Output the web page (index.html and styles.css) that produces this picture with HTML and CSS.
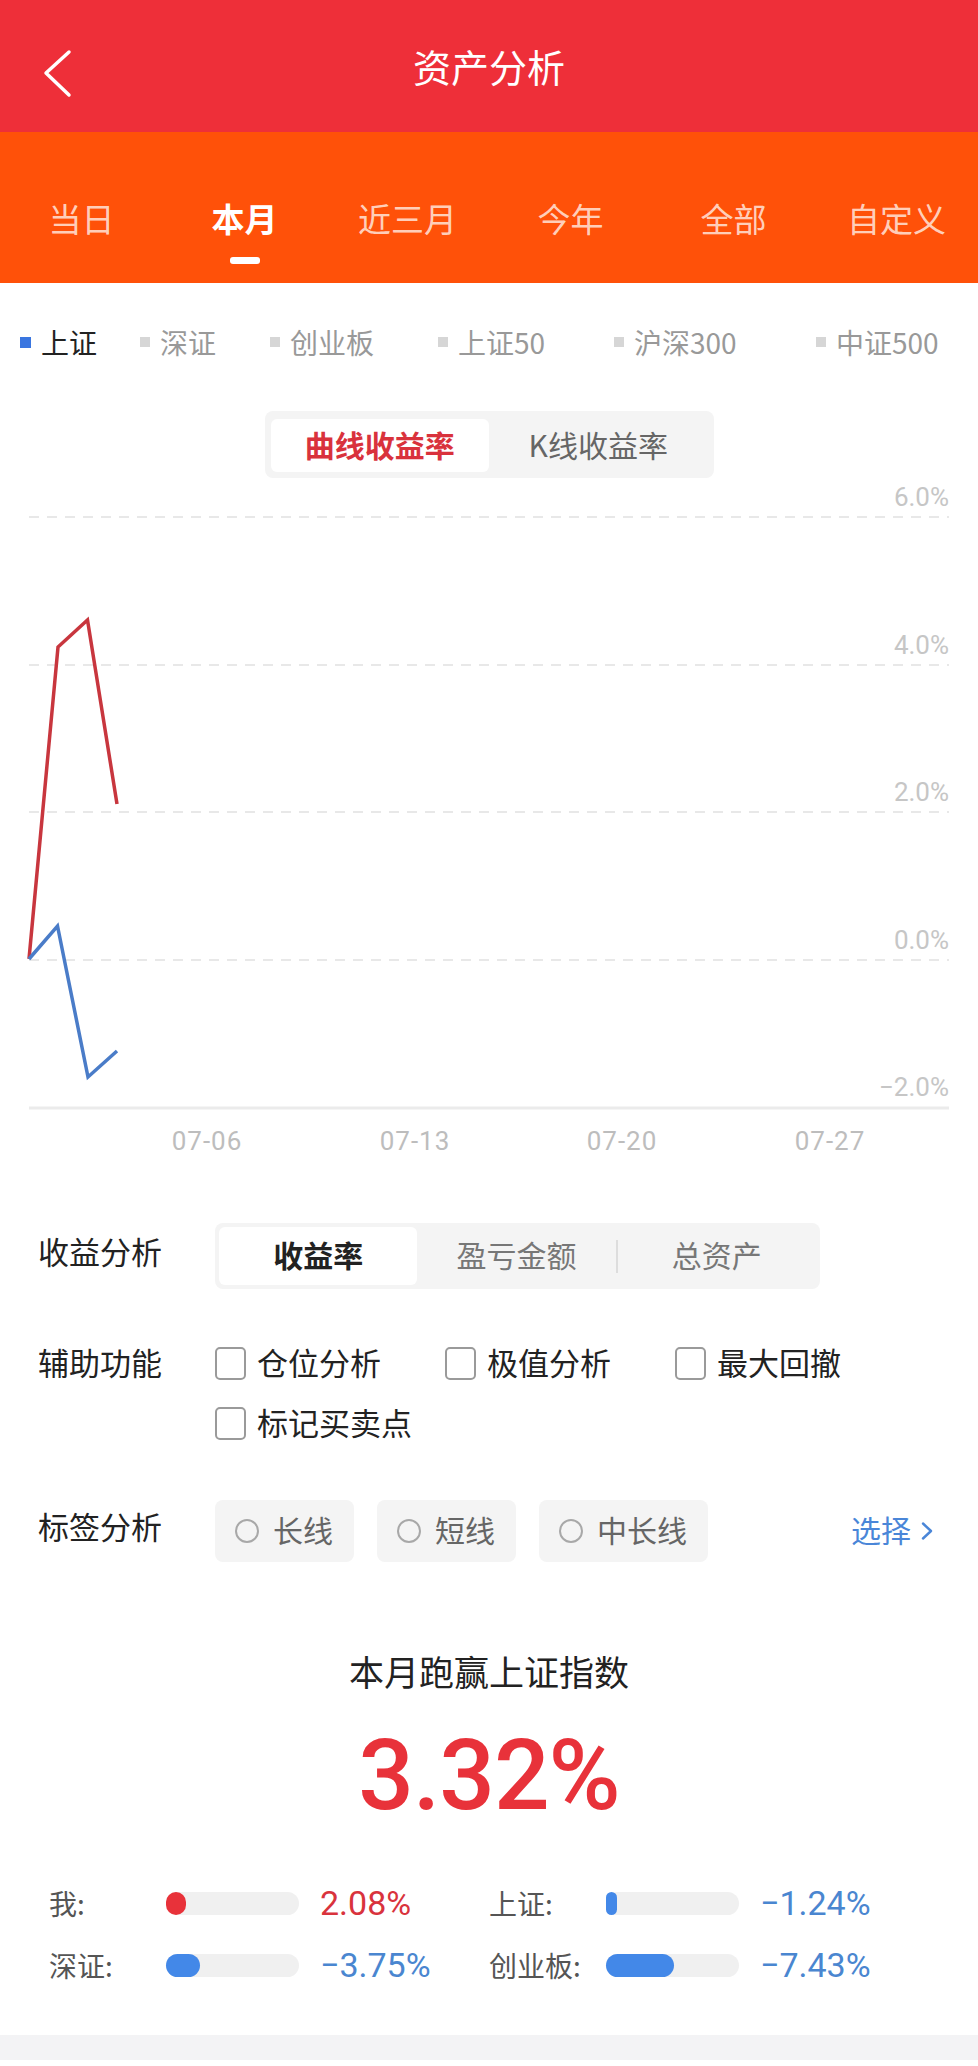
FILE: index.html
```html
<!DOCTYPE html>
<html lang="zh-CN">
<head>
<meta charset="utf-8">
<title>资产分析</title>
<link rel="stylesheet" href="styles.css">
</head>
<body>
<header class="nav">
  <button class="nav-back" aria-label="返回">
    <svg width="32" height="50" viewBox="0 0 32 50"><polyline points="26,4 3,25 26,47" fill="none" stroke="#fff" stroke-width="3.5" stroke-linecap="round" stroke-linejoin="round"/></svg>
  </button>
  <h1 class="nav-title">资产分析</h1>
  <span></span>
</header>

<nav class="tabs">
  <div class="tab">当日</div>
  <div class="tab active">本月</div>
  <div class="tab">近三月</div>
  <div class="tab">今年</div>
  <div class="tab">全部</div>
  <div class="tab">自定义</div>
</nav>

<div class="legend">
  <span class="legend-item active">上证</span>
  <span class="legend-item">深证</span>
  <span class="legend-item">创业板</span>
  <span class="legend-item">上证50</span>
  <span class="legend-item">沪深300</span>
  <span class="legend-item">中证500</span>
</div>

<div class="seg">
  <div class="seg-item active">曲线收益率</div>
  <div class="seg-item">K线收益率</div>
</div>

<svg class="chart" width="978" height="702" viewBox="0 0 978 702">
  <g class="grid">
    <line x1="29" y1="39" x2="949" y2="39"/>
    <line x1="29" y1="187" x2="949" y2="187"/>
    <line x1="29" y1="334" x2="949" y2="334"/>
    <line x1="29" y1="482" x2="949" y2="482"/>
  </g>
  <line class="axis" x1="29" y1="630" x2="949" y2="630"/>
  <g class="y-labels">
    <text x="949" y="19">6.0%</text>
    <text x="949" y="167">4.0%</text>
    <text x="949" y="314">2.0%</text>
    <text x="949" y="462">0.0%</text>
    <text x="949" y="609">−2.0%</text>
  </g>
  <g class="x-labels">
    <text x="207" y="663">07-06</text>
    <text x="415" y="663">07-13</text>
    <text x="622" y="663">07-20</text>
    <text x="830" y="663">07-27</text>
  </g>
  <polyline class="line-mine" points="29,481 58,169 87.5,142 117,326"/>
  <polyline class="line-index" points="29,481 57.5,448 88,599 117,573"/>
</svg>

<section class="opt-row opt-center">
  <div class="opt-label">收益分析</div>
  <div class="seg2">
    <div class="seg2-item active">收益率</div>
    <div class="seg2-item">盈亏金额</div>
    <i class="seg2-divider"></i>
    <div class="seg2-item">总资产</div>
  </div>
</section>

<section class="opt-row opt-checks">
  <div class="opt-label">辅助功能</div>
  <div class="checks">
    <label class="check"><span class="box"></span>仓位分析</label>
    <label class="check"><span class="box"></span>极值分析</label>
    <label class="check"><span class="box"></span>最大回撤</label>
    <label class="check"><span class="box"></span>标记买卖点</label>
  </div>
</section>

<section class="opt-row opt-center opt-tags">
  <div class="opt-label">标签分析</div>
  <div class="tags">
    <span class="chip"><span class="radio"></span><span class="chip-text">长线</span></span>
    <span class="chip"><span class="radio"></span><span class="chip-text">短线</span></span>
    <span class="chip"><span class="radio"></span><span class="chip-text">中长线</span></span>
    <a class="pick"><span class="pick-text">选择</span><svg width="12" height="18" viewBox="0 0 12 18"><polyline points="2,1.5 10,9 2,16.5" fill="none" stroke="#4A86D8" stroke-width="2.4" stroke-linecap="round" stroke-linejoin="round"/></svg></a>
  </div>
</section>

<section class="summary">
  <h2 class="summary-title">本月跑赢上证指数</h2>
  <div class="summary-value">3.32%</div>
  <div class="stats">
    <div class="stat"><span class="stat-label">我:</span><span class="track"><span class="fill up" style="width:20px"></span></span><span class="stat-val up">2.08%</span></div>
    <div class="stat"><span class="stat-label">上证:</span><span class="track"><span class="fill down" style="width:11px"></span></span><span class="stat-val down">−1.24%</span></div>
    <div class="stat"><span class="stat-label">深证:</span><span class="track"><span class="fill down" style="width:34px"></span></span><span class="stat-val down">−3.75%</span></div>
    <div class="stat"><span class="stat-label">创业板:</span><span class="track"><span class="fill down" style="width:68px"></span></span><span class="stat-val down">−7.43%</span></div>
  </div>
</section>

<footer class="foot"></footer>
</body>
</html>
```

FILE: styles.css
```css
* {
  box-sizing: border-box;
  margin: 0;
  padding: 0;
}

body {
  width: 978px;
  background: #fff;
  font-family: "Noto Sans CJK SC", "Noto Sans", sans-serif;
  color: #222;
}

/* top bar */
.nav {
  height: 132px;
  background: #EE2F39;
  display: grid;
  grid-template-columns: 120px 1fr 120px;
  align-items: center;
}

.nav-back {
  align-self: start;
  margin: 48px 0 0 43px;
  width: 32px;
  height: 50px;
  background: none;
  border: 0;
}

.nav-back svg {
  display: block;
}

.nav-title {
  text-align: center;
  color: #fff;
  font-size: 38px;
  font-weight: 400;
  line-height: 50px;
}

/* period tabs */
.tabs {
  height: 151px;
  background: #FF5109;
  display: grid;
  grid-template-columns: repeat(6, 1fr);
}

.tab {
  display: flex;
  flex-direction: column;
  align-items: center;
  padding-top: 66px;
  font-size: 33px;
  line-height: 40px;
  color: rgba(255, 255, 255, 0.74);
}

.tab.active {
  color: #fff;
  font-weight: 700;
}

.tab.active::after {
  content: "";
  width: 30px;
  height: 7px;
  border-radius: 3px;
  background: #fff;
  margin-top: 19px;
}

/* index legend */
.legend {
  display: grid;
  grid-template-columns: 120px 130px 168px 176px 202px 1fr;
  padding: 41px 0 0 20px;
  font-size: 28px;
  line-height: 36px;
  color: #999;
}

.legend-item {
  display: flex;
  align-items: center;
  gap: 10px;
}

.legend-item::before {
  content: "";
  width: 10px;
  height: 10px;
  background: #D6D6D6;
}

.legend-item.active {
  color: #222;
}

.legend-item.active::before {
  width: 11px;
  height: 11px;
  background: #3A76E0;
}

/* chart mode switch */
.seg {
  width: 449px;
  height: 67px;
  margin: 51px auto 0;
  background: #F4F4F4;
  border-radius: 8px;
  padding: 8px 6px 6px;
  display: grid;
  grid-template-columns: 1fr 1fr;
}

.seg-item {
  display: flex;
  align-items: center;
  justify-content: center;
  padding-bottom: 4px;
  font-size: 30px;
  color: #666;
  border-radius: 6px;
}

.seg-item.active {
  background: #fff;
  color: #D9323C;
  font-weight: 700;
}

/* chart */
.chart {
  display: block;
}

.grid line {
  stroke: #E8E8E8;
  stroke-width: 2;
  stroke-dasharray: 10 8;
}

.axis {
  stroke: #EBEBEB;
  stroke-width: 3;
}

.y-labels text {
  font-family: Roboto, "Liberation Sans", sans-serif;
  font-size: 26px;
  fill: #C6C6C6;
  text-anchor: end;
  dominant-baseline: central;
}

.x-labels text {
  font-family: Roboto, "Liberation Sans", sans-serif;
  font-size: 26px;
  letter-spacing: 1px;
  fill: #BDBDBD;
  text-anchor: middle;
  dominant-baseline: central;
}

.line-mine,
.line-index {
  fill: none;
  stroke-width: 3.5;
  stroke-linejoin: miter;
}

.line-mine {
  stroke: #C8363E;
}

.line-index {
  stroke: #4A7CC8;
}

/* option rows */
.opt-row {
  display: grid;
  grid-template-columns: 177px 1fr;
  padding: 0 45px 0 38px;
  margin-top: 53px;
  align-items: start;
}

.opt-center {
  align-items: center;
  margin-top: 43px;
}

.opt-center .opt-label {
  padding-bottom: 10px;
}

.opt-tags {
  margin-top: 58px;
}

.opt-label {
  font-size: 31px;
  line-height: 40px;
  color: #222;
}

.seg2 {
  width: 605px;
  height: 66px;
  background: #F4F4F4;
  border-radius: 8px;
  padding: 4px;
  display: flex;
  align-items: stretch;
}

.seg2-item {
  flex: 1;
  display: flex;
  align-items: center;
  justify-content: center;
  padding-bottom: 5px;
  font-size: 30px;
  color: #777;
  border-radius: 6px;
}

.seg2-item.active {
  background: #fff;
  color: #222;
  font-weight: 700;
}

.seg2-divider {
  width: 2px;
  height: 33px;
  align-self: center;
  background: #DDDDDD;
}

.checks {
  display: grid;
  grid-template-columns: repeat(3, 230px);
  row-gap: 20px;
}

.check {
  display: flex;
  align-items: center;
  gap: 11px;
  font-size: 31px;
  line-height: 40px;
  color: #222;
}

.box {
  width: 31px;
  height: 33px;
  margin-top: 3px;
  border: 2px solid #9A9A9A;
  border-radius: 5px;
}

.tags {
  display: flex;
  align-items: center;
  gap: 23px;
}

.chip {
  height: 62px;
  padding: 0 21px 0 20px;
  background: #F4F4F4;
  border-radius: 8px;
  display: flex;
  align-items: center;
  gap: 14px;
  font-size: 30px;
  color: #666;
}

.chip-text,
.pick-text {
  padding-bottom: 5px;
}

.radio {
  width: 24px;
  height: 24px;
  border: 2px solid #A8A8A8;
  border-radius: 50%;
}

.pick {
  margin-left: auto;
  display: flex;
  align-items: center;
  gap: 10px;
  font-size: 30px;
  color: #4A86D8;
}

/* monthly summary */
.summary {
  text-align: center;
  margin-top: 87px;
}

.summary-title {
  font-size: 35px;
  line-height: 44px;
  font-weight: 400;
  color: #222;
}

.summary-value {
  margin-top: 28px;
  font-family: Roboto, "Liberation Sans", sans-serif;
  font-weight: 500;
  font-size: 98px;
  line-height: 110px;
  letter-spacing: -1px;
  color: #E8323A;
}

.stats {
  display: grid;
  grid-template-columns: 440px 440px;
  row-gap: 22px;
  padding-left: 49px;
  margin-top: 52px;
  text-align: left;
}

.stat {
  display: grid;
  grid-template-columns: 117px 133px 1fr;
  align-items: center;
  line-height: 40px;
}

.stat-label {
  font-size: 28px;
  color: #555;
}

.track {
  display: block;
  height: 23px;
  border-radius: 12px;
  background: #F0F0F0;
}

.fill {
  display: block;
  height: 100%;
  border-radius: 12px;
}

.fill.up {
  background: #E8323A;
}

.fill.down {
  background: #4388E8;
}

.stat-val {
  margin-left: 21px;
  font-family: Roboto, "Liberation Sans", sans-serif;
  font-size: 34px;
}

.stat-val.up {
  color: #D9333D;
}

.stat-val.down {
  color: #4A86D0;
}

.foot {
  height: 25px;
  margin-top: 50px;
  background: #F3F3F5;
}
```
